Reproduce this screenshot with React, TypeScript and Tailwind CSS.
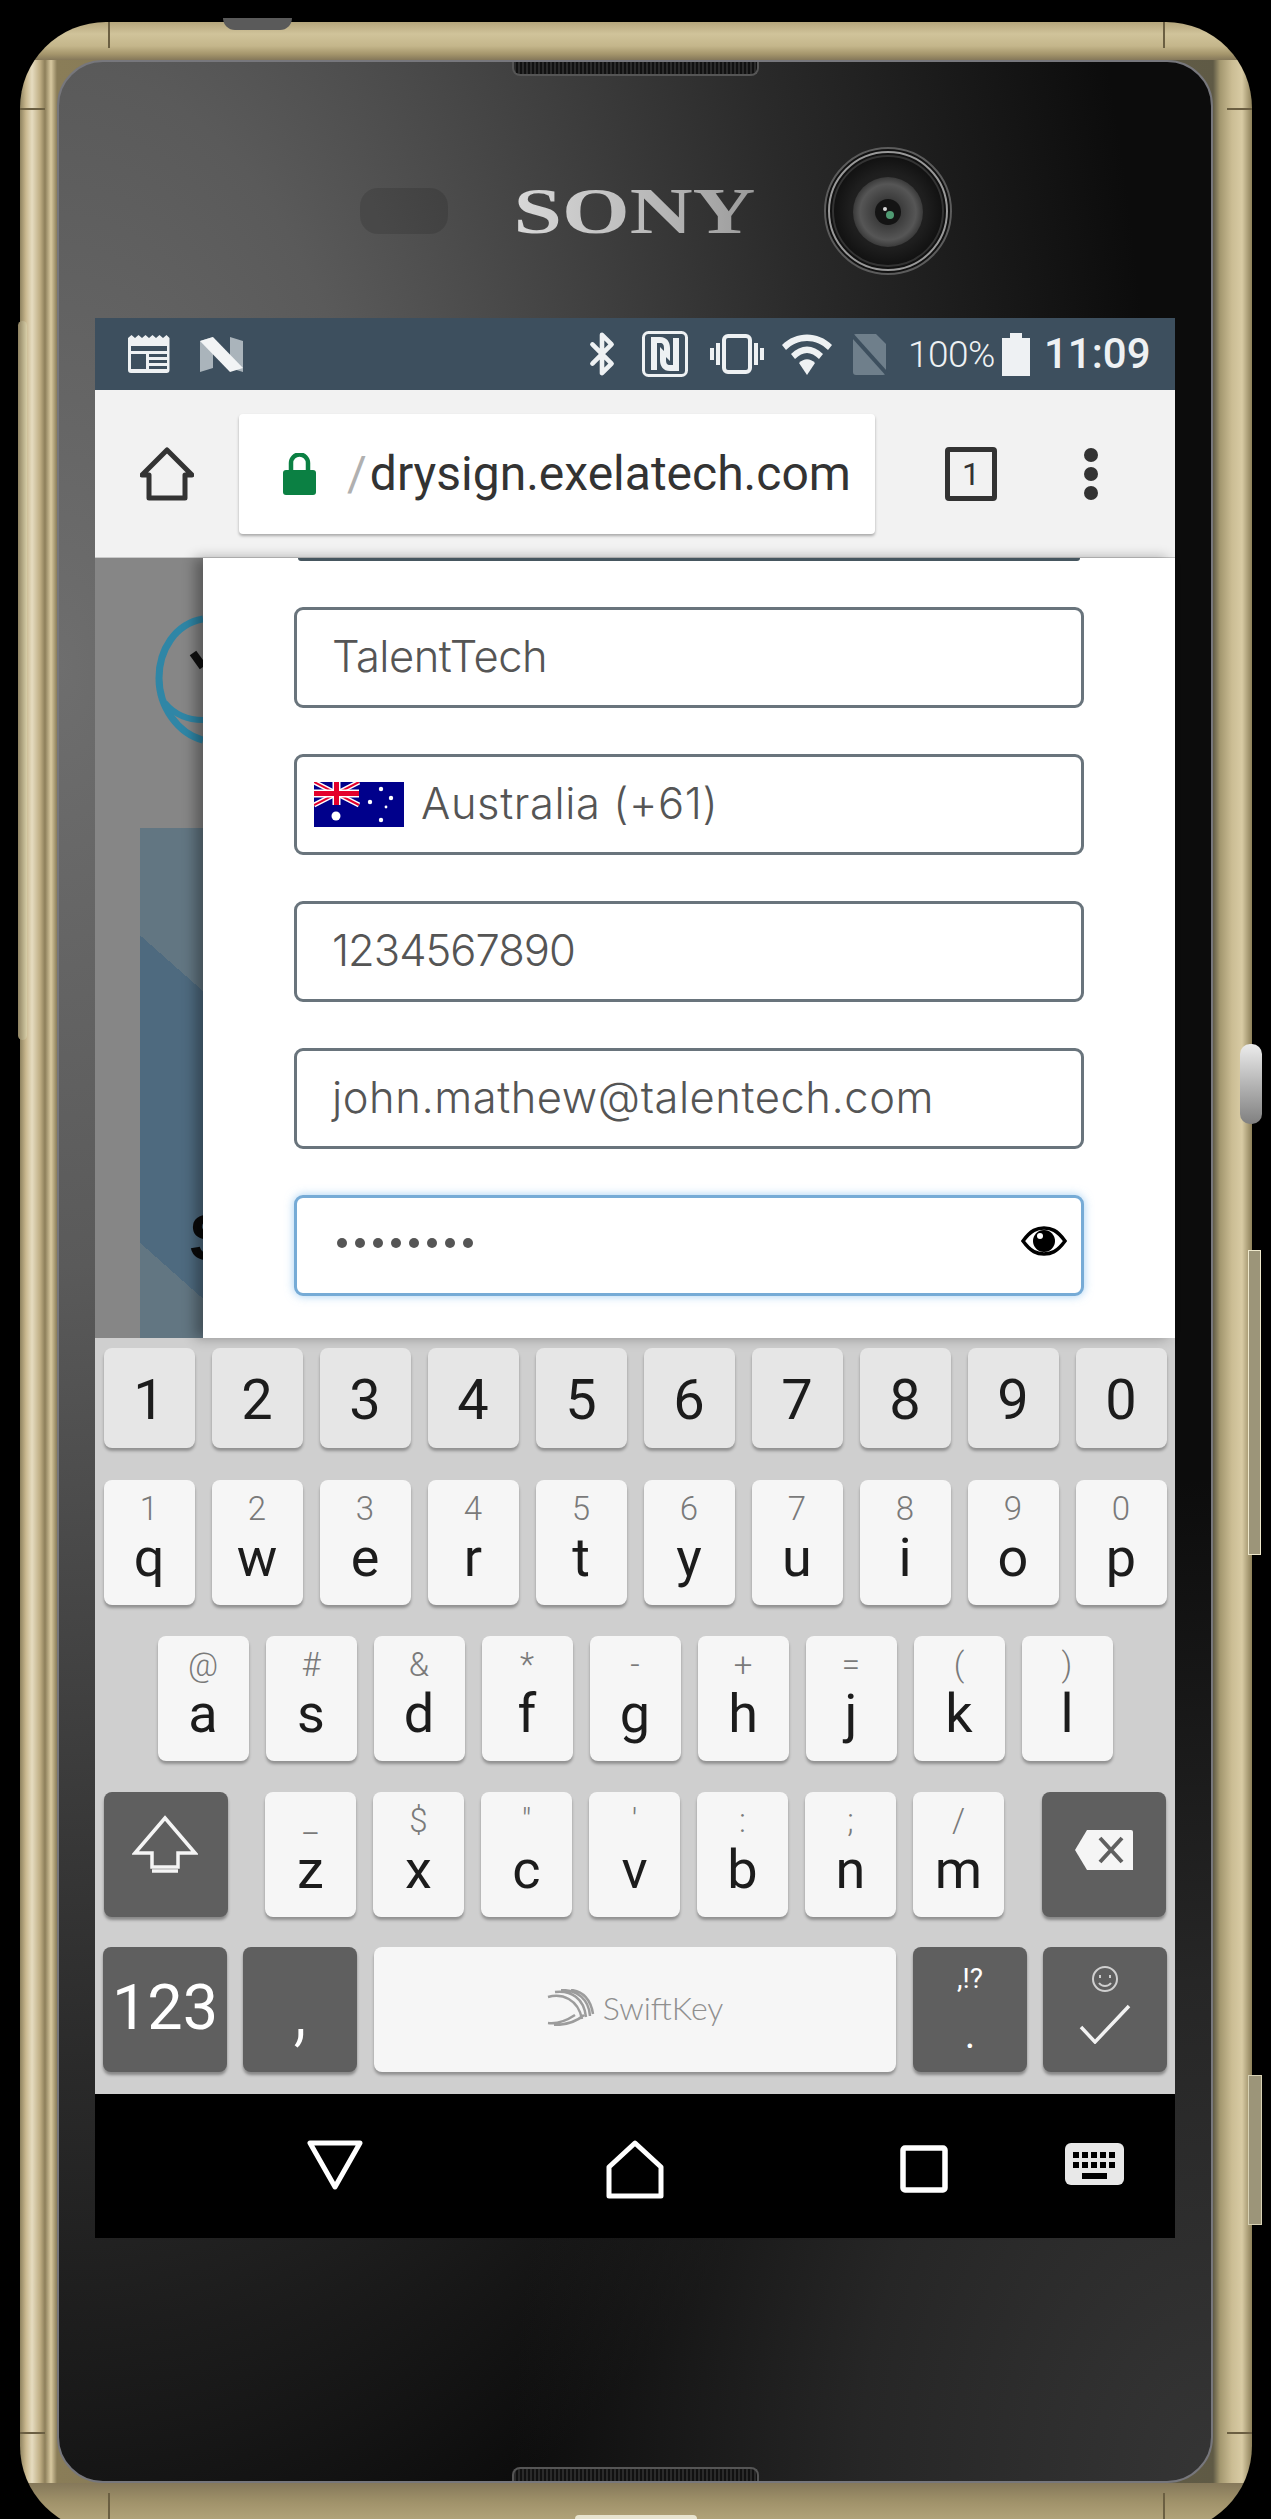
import { Bluetooth } from 'lucide-react';

const ROBOTO = "font-['Roboto',sans-serif]";

const DIGITS = ['1', '2', '3', '4', '5', '6', '7', '8', '9', '0'];
const ROW_Q = [
  ['1', 'q'], ['2', 'w'], ['3', 'e'], ['4', 'r'], ['5', 't'],
  ['6', 'y'], ['7', 'u'], ['8', 'i'], ['9', 'o'], ['0', 'p'],
];
const ROW_A = [
  ['@', 'a'], ['#', 's'], ['&', 'd'], ['*', 'f'], ['-', 'g'],
  ['+', 'h'], ['=', 'j'], ['(', 'k'], [')', 'l'],
];
const ROW_Z = [
  ['_', 'z'], ['$', 'x'], ['"', 'c'], ["'", 'v'], [':', 'b'], [';', 'n'], ['/', 'm'],
];

function LetterKey({ hint, letter }: { hint: string; letter: string }) {
  return (
    <div className="w-[91px] h-[125px] rounded-[8px] bg-[#f6f6f6] shadow-[0_3px_3px_rgba(0,0,0,0.3)] flex flex-col items-center pt-[12px]">
      <span className="text-[33px] leading-[33px] font-light text-[#7a7a7a]">{hint}</span>
      <span className="text-[54px] leading-[54px] mt-[6px] text-[#1c1c1c]">{letter}</span>
    </div>
  );
}

function DarkKey({ className, children }: { className: string; children: React.ReactNode }) {
  return (
    <div className={`h-[125px] rounded-[8px] bg-[#5f5f5f] shadow-[0_3px_3px_rgba(0,0,0,0.35)] text-white flex flex-col items-center justify-center ${className}`}>
      {children}
    </div>
  );
}

function Field({ children, focused }: { children: React.ReactNode; focused?: boolean }) {
  return (
    <div
      className={`h-[101px] rounded-[9px] border-[3px] bg-white flex items-center text-[43.5px] text-[#555] font-['Inter',sans-serif] font-light ${
        focused ? 'border-[#76abd6] shadow-[0_0_10px_rgba(102,175,233,0.6)]' : 'border-[#69747c]'
      }`}
    >
      {children}
    </div>
  );
}

function StatusIcons() {
  return (
    <div className="h-[72px] bg-[#3d4f5e] flex items-center text-[#eef1f3]">
      <svg className="ml-[33px]" width="42" height="38" viewBox="0 0 42 38">
        <path d="M0 3l3.500-3 3.500 3 3.500-3 3.500 3 3.500-3 3.500 3 3.500-3 3.500 3 3.500-3 3.500 3 3.500-3 3 3v32a3 3 0 0 1-3 3H3a3 3 0 0 1-3-3z" fill="#eef1f3" />
        <path d="M3 11h36v5H3zM3 19h15v15H3zM21 19h18v3H21zM21 25h18v3H21zM21 31h18v3H21z" fill="#3d4f5e" />
      </svg>
      <svg className="ml-[30px]" width="43" height="35" viewBox="0 0 43 35">
        <path d="M0 4l13-4v31L0 35z" fill="#aab4bb" />
        <path d="M30 0l13 4v31l-13-4z" fill="#aab4bb" />
        <path d="M0 4L13 0l30 31-13 4z" fill="#f2f4f5" />
      </svg>
      <Bluetooth className="ml-[336px]" size={46} strokeWidth={2.4} />
      <svg className="ml-[17px]" width="46" height="46" viewBox="0 0 46 46" fill="none">
        <rect x="1.500" y="1.500" width="43" height="43" rx="5" stroke="#eef1f3" strokeWidth="3" />
        <path d="M9 6h9c7 0 10 5 10 11v13l-6-6v-7c0-3-1-5-4-5h-3v27H9zM37 40H28c-7 0-10-5-10-11V16l6 6v7c0 3 1 5 4 5h3V7h6z" fill="#eef1f3" />
      </svg>
      <svg className="ml-[22px]" width="54" height="40" viewBox="0 0 54 40" fill="none" stroke="#eef1f3">
        <rect x="14" y="2" width="26" height="36" rx="4" strokeWidth="4" />
        <path d="M8 9v22M2 14v12M46 9v22M52 14v12" strokeWidth="4" />
      </svg>
      <svg className="ml-[18px]" width="50" height="41" viewBox="0 0 50 41">
        <path d="M0 11C14-3 36-3 50 11l-4 5C34 4 16 4 4 16z" fill="#eef1f3" />
        <path d="M9 20C19 10 31 10 41 20l-4 5c-8-8-16-8-24 0z" fill="#eef1f3" />
        <path d="M17 29c5-5 11-5 16 0l-8 12z" fill="#eef1f3" />
      </svg>
      <svg className="ml-[20px]" width="38" height="41" viewBox="0 0 38 41">
        <path d="M4 0h20l10 10v28a3 3 0 0 1-3 3H4a3 3 0 0 1-3-3V3a3 3 0 0 1 3-3z" fill="#6f7f8b" />
        <path d="M0 1l36 40" stroke="#3d4f5e" strokeWidth="4" />
      </svg>
      <span className={`${ROBOTO} ml-[18px] w-[84px] text-[37px] font-light leading-none tracking-[-0.5px]`}>100%</span>
      <svg className="ml-[10px]" width="28" height="43" viewBox="0 0 28 43">
        <path d="M8 0h12v5h8v38H0V5h8z" fill="#eef1f3" />
      </svg>
      <span className={`${ROBOTO} ml-[14px] text-[42px] font-medium leading-none`}>11:09</span>
    </div>
  );
}

function Toolbar() {
  return (
    <div className="h-[168px] bg-[#f2f2f2] border-b border-[#c9c9c9] flex items-center">
      <svg className="ml-[45px]" width="54" height="54" viewBox="0 0 54 54" fill="none" stroke="#333" strokeWidth="5" strokeLinejoin="round">
        <path d="M2 28L27 3l25 25h-7v23H9V28z" />
      </svg>
      <div className="ml-[45px] w-[636px] h-[120px] rounded-[4px] bg-white shadow-[0_2px_3px_rgba(0,0,0,0.3)] flex items-center">
        <svg className="ml-[44px]" width="33" height="42" viewBox="0 0 33 42">
          <path d="M8 18v-8a8.500 8.500 0 0 1 17 0v8" fill="none" stroke="#0b8043" strokeWidth="4.500" />
          <rect y="17" width="33" height="25" rx="3" fill="#0b8043" />
        </svg>
        <span className={`${ROBOTO} ml-[31px] text-[48px] leading-none text-[#b0b0b0]`}>/</span>
        <span className={`${ROBOTO} ml-[3px] text-[48px] leading-none text-[#333]`}>drysign.exelatech.com</span>
      </div>
      <div className={`${ROBOTO} ml-[70px] w-[52px] h-[54px] rounded-[4px] border-[5px] border-[#333] flex items-center justify-center text-[32px] text-[#333]`}>
        1
      </div>
      <div className="ml-[87px] flex flex-col gap-[5px]">
        <div className="w-[14px] h-[14px] rounded-full bg-[#333]" />
        <div className="w-[14px] h-[14px] rounded-full bg-[#333]" />
        <div className="w-[14px] h-[14px] rounded-full bg-[#333]" />
      </div>
    </div>
  );
}

function AustraliaFlag() {
  return (
    <svg className="ml-[17px] shrink-0" width="90" height="45" viewBox="0 0 90 45">
      <rect width="90" height="45" fill="#00008b" />
      <path d="M0 0l45 23M45 0L0 23" stroke="#fff" strokeWidth="5" />
      <path d="M0 0l45 23M45 0L0 23" stroke="#e4002b" strokeWidth="2" />
      <path d="M22.500 0v23M0 11.500h45" stroke="#fff" strokeWidth="8" />
      <path d="M22.500 0v23M0 11.500h45" stroke="#e4002b" strokeWidth="5" />
      <circle cx="22" cy="34" r="4.500" fill="#fff" />
      <circle cx="67" cy="7" r="2.200" fill="#fff" />
      <circle cx="67" cy="38" r="2.200" fill="#fff" />
      <circle cx="56" cy="20" r="2.200" fill="#fff" />
      <circle cx="77" cy="16" r="2.200" fill="#fff" />
      <circle cx="72" cy="25" r="1.400" fill="#fff" />
    </svg>
  );
}

function Page() {
  return (
    <div className="h-[780px] flex">
      <div className="w-[108px] bg-[#868686] flex flex-col overflow-hidden">
        <svg className="ml-[60px] mt-[57px] shrink-0" width="48" height="130" viewBox="0 0 48 130" fill="none">
          <path d="M48 4C20 9 4 35 4 63c0 30 20 56 44 62" stroke="#2f86a6" strokeWidth="7" />
          <path d="M10 88c10 12 24 17 38 17" stroke="#2f86a6" strokeWidth="6" />
          <path d="M38 38l10 14" stroke="#111" strokeWidth="8" />
        </svg>
        <div className="mt-[83px] ml-[45px] flex-1 pl-[49px] pt-[378px] overflow-hidden bg-[linear-gradient(221.6deg,#627682_122px,#4e6a7f_122px,#4e6a7f_352px,#627682_352px)]">
          <span className="font-['Liberation_Sans',sans-serif] text-[64px] font-bold leading-none text-[#0a0a0a]">S</span>
        </div>
      </div>
      <div className="flex-1 bg-white px-[91px] flex flex-col gap-[46px] shadow-[-8px_0_12px_rgba(0,0,0,0.32)]">
        <div className="mx-[4px] h-[3px] rounded-b-[6px] bg-[#46565f]" />
        <Field><span className="ml-[35px] mb-[2px] tracking-[-0.5px]">TalentTech</span></Field>
        <Field>
          <AustraliaFlag />
          <span className="ml-[17px] mb-[2px] tracking-[0.6px]">Australia (+61)</span>
        </Field>
        <Field><span className="ml-[35px] mb-[2px] tracking-[-1px]">1234567890</span></Field>
        <Field><span className="ml-[35px] mb-[2px] tracking-[0.55px]">john.mathew@talentech.com</span></Field>
        <Field focused>
          <div className="ml-[40px] mb-[6px] flex gap-[8px]">
            {Array.from({ length: 8 }).map((_, i) => (
              <div key={i} className="w-[10px] h-[10px] rounded-full bg-[#555]" />
            ))}
          </div>
          <svg className="ml-auto mr-[14px] mb-[10px]" width="46" height="30" viewBox="0 0 46 30">
            <path d="M2 15C10 4 16 2 23 2s13 2 21 13c-8 11-14 13-21 13S10 26 2 15z" fill="none" stroke="#000" strokeWidth="3.500" />
            <circle cx="23" cy="15" r="11" fill="#000" />
            <circle cx="19" cy="10" r="3" fill="#fff" />
          </svg>
        </Field>
      </div>
    </div>
  );
}

function Keyboard() {
  return (
    <div className={`${ROBOTO} h-[756px] bg-[#cfcfcf] pt-[10px] flex flex-col items-center`}>
      <div className="flex gap-[17px]">
        {DIGITS.map((d) => (
          <div key={d} className="w-[91px] h-[100px] rounded-[8px] bg-[#e6e6e6] shadow-[0_3px_3px_rgba(0,0,0,0.3)] flex items-center justify-center pt-[4px] text-[56px] text-[#1c1c1c]">
            {d}
          </div>
        ))}
      </div>
      <div className="flex gap-[17px] mt-[32px]">
        {ROW_Q.map(([h, l]) => <LetterKey key={l} hint={h} letter={l} />)}
      </div>
      <div className="flex gap-[17px] mt-[31px]">
        {ROW_A.map(([h, l]) => <LetterKey key={l} hint={h} letter={l} />)}
      </div>
      <div className="flex items-center mt-[31px]">
        <DarkKey className="w-[124px]">
          <svg className="mb-[22px] mr-[3px]" width="66" height="58" viewBox="0 0 66 58" fill="none" stroke="#f5f5f5" strokeWidth="3.500">
            <path d="M33 3L63 38H46v14H20V38H3z" />
            <path d="M20 56h26" />
          </svg>
        </DarkKey>
        <div className="flex gap-[17px] ml-[37px] mr-[38px]">
          {ROW_Z.map(([h, l]) => <LetterKey key={l} hint={h} letter={l} />)}
        </div>
        <DarkKey className="w-[124px]">
          <svg className="mb-[10px]" width="58" height="40" viewBox="0 0 58 40">
            <path d="M12 0h44a2 2 0 0 1 2 2v38H12L0 20z" fill="#f5f5f5" />
            <path d="M25 8l22 24M47 8L25 32" stroke="#5f5f5f" strokeWidth="4" />
          </svg>
        </DarkKey>
      </div>
      <div className="flex items-center mt-[30px]">
        <DarkKey className="w-[124px] text-[63px] leading-none pb-[4px]">123</DarkKey>
        <DarkKey className="w-[114px] ml-[16px] text-[82px] leading-none font-light pb-[2px]">,</DarkKey>
        <div className="w-[522px] h-[125px] ml-[17px] rounded-[8px] bg-[#f6f6f6] shadow-[0_3px_3px_rgba(0,0,0,0.3)] flex items-center justify-center gap-[6px] pb-[4px]">
          <svg width="50" height="37" viewBox="0 0 50 37" fill="none" stroke="#9c9c9c" strokeWidth="2.500">
            <path d="M1 8c14-4 30 2 34 22M8 3c16-2 29 6 31 25M14 1c16 0 28 9 29 26M24 1c12 1 20 10 22 24M1 34c8 1 18-2 27-8M7 36c10 0 22-3 30-10" />
          </svg>
          <span className="font-['Lato',sans-serif] font-light text-[32px] leading-none text-[#8f8f8f]">SwiftKey</span>
        </div>
        <DarkKey className="w-[114px] ml-[17px]">
          <span className="text-[28px] leading-[28px]">,!?</span>
          <span className="text-[40px] leading-[40px] mt-[22px]">.</span>
        </DarkKey>
        <DarkKey className="w-[124px] ml-[16px]">
          <svg className="mb-[10px]" width="52" height="78" viewBox="0 0 52 78" fill="none" stroke="#f2f2f2">
            <circle cx="26" cy="13" r="12" strokeWidth="2" stroke="#cfcfcf" />
            <path d="M21 9v3M31 9v3M20 17c3 4 9 4 12 0" strokeWidth="2" stroke="#cfcfcf" />
            <path d="M2 61l14 15L50 40" strokeWidth="3.500" />
          </svg>
        </DarkKey>
      </div>
    </div>
  );
}

function NavBar() {
  return (
    <div className="h-[144px] bg-black flex items-center relative">
      <svg className="ml-[212px] mt-[-3px]" width="56" height="50" viewBox="0 0 56 50" fill="none" stroke="#fff" strokeWidth="5" strokeLinejoin="round">
        <path d="M3 3h50L28 47z" />
      </svg>
      <svg className="ml-[243px] mt-[7px]" width="58" height="59" viewBox="0 0 58 59" fill="none" stroke="#fff" strokeWidth="5" strokeLinejoin="round">
        <path d="M3 27L29 3l26 24v29H3z" />
      </svg>
      <svg className="ml-[236px] mt-[5px]" width="48" height="48" viewBox="0 0 48 48" fill="none" stroke="#fff" strokeWidth="5.500">
        <rect x="3" y="3" width="42" height="42" rx="2" />
      </svg>
      <svg className="ml-[117px] mt-[-5px]" width="59" height="42" viewBox="0 0 59 42">
        <rect width="59" height="42" rx="6" fill="#e8e8e8" />
        <path d="M8 9h6v6H8zM17 9h6v6h-6zM26 9h6v6h-6zM35 9h6v6h-6zM44 9h6v6h-6zM8 19h6v6H8zM17 19h6v6h-6zM26 19h6v6h-6zM35 19h6v6h-6zM44 19h6v6h-6zM17 30h25v6H17z" fill="#000" />
      </svg>
    </div>
  );
}

function Speaker({ bottom }: { bottom?: boolean }) {
  return (
    <div
      className={`absolute left-[453px] w-[247px] h-[14px] border-[#555] border-x-2 bg-[repeating-linear-gradient(90deg,#2b2b2b_0px,#2b2b2b_2px,#111_2px,#111_4px)] ${
        bottom ? 'bottom-0 rounded-t-[8px] border-t-2' : 'top-0 rounded-b-[8px] border-b-2'
      }`}
    />
  );
}

function Camera() {
  return (
    <svg className="ml-[67px]" width="130" height="130" viewBox="0 0 130 130">
      <defs>
        <radialGradient id="barrel">
          <stop offset="0%" stopColor="#2a2a2a" />
          <stop offset="70%" stopColor="#1e1e1e" />
          <stop offset="100%" stopColor="#111" />
        </radialGradient>
        <radialGradient id="lens">
          <stop offset="35%" stopColor="#3a3a3a" />
          <stop offset="80%" stopColor="#565656" />
          <stop offset="100%" stopColor="#3a3a3a" />
        </radialGradient>
      </defs>
      <circle cx="65" cy="65" r="63" fill="#111" stroke="#5c5c5c" strokeWidth="2" />
      <circle cx="65" cy="65" r="59" fill="none" stroke="#999" strokeWidth="2" />
      <circle cx="65" cy="65" r="55" fill="url(#barrel)" stroke="#333" strokeWidth="2" />
      <circle cx="65" cy="66" r="35" fill="url(#lens)" />
      <circle cx="65" cy="66" r="13" fill="#141414" />
      <circle cx="67" cy="69" r="4" fill="#4f9a72" />
      <circle cx="62" cy="63" r="2" fill="#d8d8d8" />
    </svg>
  );
}

export default function App() {
  return (
    <div className="relative w-[1271px] h-[2519px] bg-black overflow-hidden">
      {/* phone body */}
      <div className="absolute left-[20px] top-[22px] w-[1232px] h-[2510px] rounded-[86px] pl-[37px] pr-[39px] pt-[38px] bg-[linear-gradient(to_bottom,#b5a67c_0px,#d0c39a_12px,#c4b68b_24px,#a5966c_32px,#85785a_38px,transparent_38px,transparent_2461px,#85785a_2461px,#a0926a_2480px,#bdae84_2510px),linear-gradient(to_right,#8f8360_0px,#c9b88f_6px,#e6dcc0_12px,#bfae84_20px,#8d7f5a_25px,#d8c9a0_31px,#8a7d58_37px,#5f5a45_1193px,#a3976f_1200px,#cbbd94_1212px,#d8cba4_1222px,#8d8059_1232px)]">
        <div className="relative w-[1156px] h-[2423px] rounded-[46px] border-2 border-[#77777c] overflow-hidden pt-[256px] px-[36px] bg-[radial-gradient(ellipse_700px_1000px_at_100%_100%,#353535_0%,#262626_50%,rgba(20,20,20,0)_100%),radial-gradient(ellipse_1100px_2000px_at_0%_25%,#6e6e6e_0%,#5a5a5a_30%,#2a2a2a_70%,#0c0c0c_100%)]">
          <Speaker />
          <Speaker bottom />
          {/* camera row */}
          <div className="absolute left-[301px] top-[84px] flex items-center">
            <div className="w-[88px] h-[46px] rounded-[18px] bg-[rgba(0,0,0,0.12)]" />
            <span className="ml-[65px] w-[243px] text-center font-['Liberation_Serif',serif] font-bold text-[66px] leading-none scale-x-[1.32] bg-[linear-gradient(to_right,#e2e2e2,#b5b5b5_60%,#8f8f8f)] bg-clip-text text-transparent">SONY</span>
            <Camera />
          </div>
          <StatusIcons />
          <Toolbar />
          <Page />
          <Keyboard />
          <NavBar />
        </div>
      </div>

      {/* side buttons and frame seams */}
      <div className="absolute left-[18px] top-[321px] w-[9px] h-[719px] rounded-[5px] bg-[linear-gradient(to_right,#8d8160,#d8cfa8)]" />
      <div className="absolute left-[1240px] top-[1044px] w-[22px] h-[80px] rounded-[10px] bg-[linear-gradient(to_bottom,#ececec,#b5b5b5,#808080)]" />
      <div className="absolute left-[1248px] top-[1250px] w-[13px] h-[305px] border border-[#efe9cc] bg-[#9c9579]" />
      <div className="absolute left-[1248px] top-[2075px] w-[14px] h-[150px] border border-[#d8d2b4] bg-[#9c9579]" />
      <div className="absolute left-[223px] top-[18px] w-[69px] h-[12px] rounded-b-[16px] bg-[#5a5a5a]" />
      <div className="absolute left-[575px] top-[2515px] w-[122px] h-[4px] rounded-t-[4px] bg-[#e8e4d0]" />
      <div className="absolute left-[20px] top-[108px] w-[25px] h-[2px] bg-[#6b5f42]" />
      <div className="absolute left-[1227px] top-[108px] w-[25px] h-[2px] bg-[#6b5f42]" />
      <div className="absolute left-[20px] top-[2432px] w-[25px] h-[2px] bg-[#6b5f42]" />
      <div className="absolute left-[1227px] top-[2432px] w-[25px] h-[2px] bg-[#6b5f42]" />
      <div className="absolute left-[108px] top-[22px] w-[2px] h-[26px] bg-[#6b5f42]" />
      <div className="absolute left-[1163px] top-[22px] w-[2px] h-[26px] bg-[#6b5f42]" />
      <div className="absolute left-[108px] top-[2493px] w-[2px] h-[26px] bg-[#6b5f42]" />
      <div className="absolute left-[1163px] top-[2493px] w-[2px] h-[26px] bg-[#6b5f42]" />
    </div>
  );
}
